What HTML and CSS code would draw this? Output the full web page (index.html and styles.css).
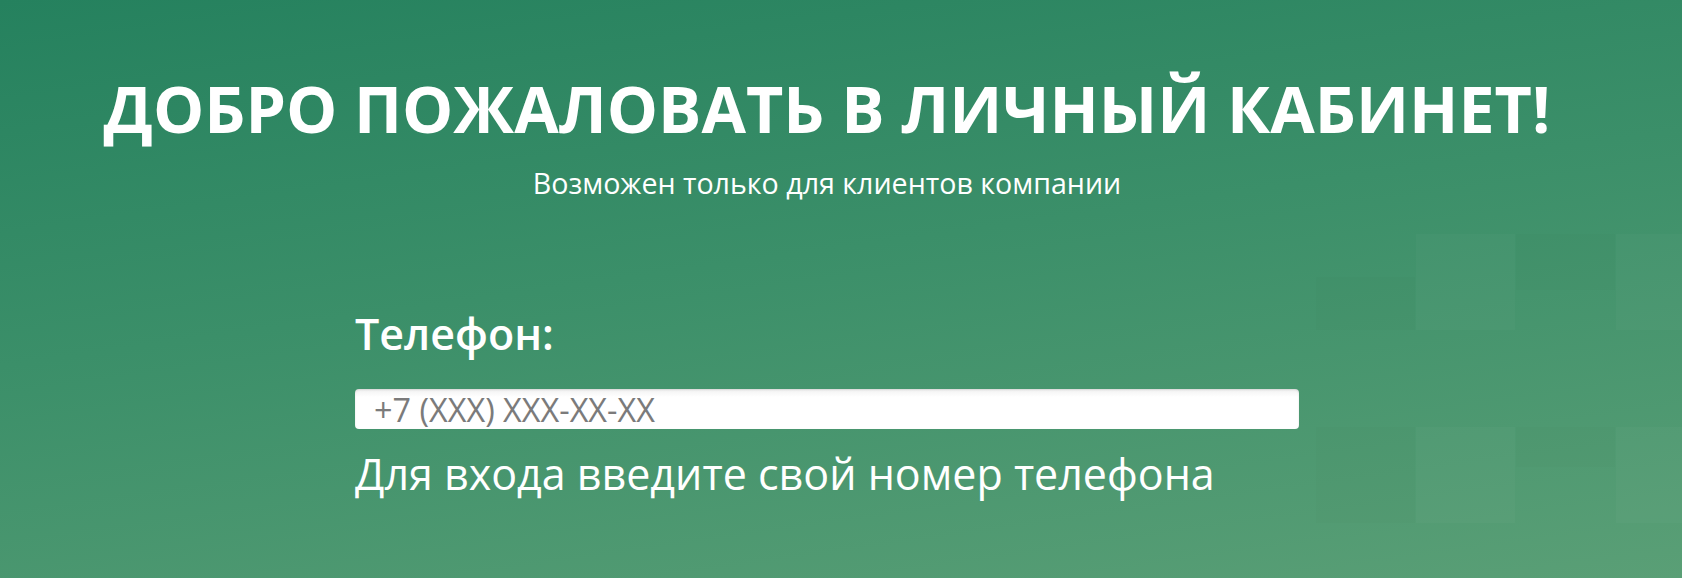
FILE: index.html
```html
<!DOCTYPE html>
<html lang="ru">
<head>
<meta charset="utf-8">
<title>Личный кабинет</title>
<link rel="stylesheet" href="styles.css">
</head>
<body>
<div class="page">
  <div class="pattern">
    <span class="sq light" style="left:1416px;top:234px"></span>
    <span class="sq light" style="left:1616px;top:234px"></span>
    <span class="sq dark" style="left:1316px;top:277px;height:53px"></span>
    <span class="sq dark" style="left:1516px;top:234px;height:56px"></span>
    <span class="sq light" style="left:1416px;top:427px"></span>
    <span class="sq light" style="left:1616px;top:427px"></span>
    <span class="sq dark" style="left:1316px;top:427px"></span>
    <span class="sq dark" style="left:1516px;top:427px;height:40px"></span>
  </div>
  <main class="content">
    <h1 class="title">ДОБРО ПОЖАЛОВАТЬ В ЛИЧНЫЙ КАБИНЕТ!</h1>
    <p class="subtitle">Возможен только для клиентов компании</p>
    <form class="login">
      <label class="label" for="phone">Телефон:</label>
      <input class="phone" id="phone" type="text" placeholder="+7 (XXX) XXX-XX-XX">
      <p class="hint">Для входа введите свой номер телефона</p>
    </form>
  </main>
</div>
</body>
</html>
```

FILE: styles.css
```css
html, body {
  margin: 0;
  padding: 0;
}
body {
  font-family: "Open Sans", "Noto Sans", sans-serif;
  color: #fff;
  background: #3a8d68;
}
.page {
  position: relative;
  width: 1682px;
  height: 578px;
  overflow: hidden;
  background: linear-gradient(172deg, #25815e 0%, #3b8f69 45%, #5a9f76 100%);
}
.pattern {
  position: absolute;
  inset: 0;
  pointer-events: none;
}
.sq {
  position: absolute;
  width: 99px;
  height: 96px;
}
.sq.light {
  background: rgba(255, 255, 255, 0.025);
}
.sq.dark {
  background: rgba(0, 40, 20, 0.01);
}
.content {
  position: relative;
  display: flex;
  flex-direction: column;
  align-items: center;
  padding: 67px 28px 0 0;
}
.title {
  margin: 0;
  font-size: 64.5px;
  line-height: 82px;
  font-weight: 700;
  white-space: nowrap;
}
.subtitle {
  margin: 15px 0 0;
  font-size: 28.6px;
  line-height: 38px;
  font-weight: 400;
}
.login {
  margin-top: 102px;
  width: 944px;
  display: flex;
  flex-direction: column;
}
.label {
  font-size: 43px;
  line-height: 60px;
  font-weight: 600;
}
.phone {
  margin-top: 25px;
  height: 40px;
  box-sizing: border-box;
  border: none;
  border-radius: 4px;
  padding: 0 19px;
  font-family: "Open Sans", "Noto Sans", sans-serif;
  font-size: 32.4px;
  color: #555;
  background: linear-gradient(#f1f1f1, #fff 8px);
  box-shadow: inset 0 1px 2px rgba(0,0,0,0.12);
  outline: none;
}
.phone::placeholder {
  color: #7b7b7b;
  opacity: 1;
}
.hint {
  margin: 16px 0 0;
  font-size: 43px;
  line-height: 58px;
  font-weight: 400;
}
```
